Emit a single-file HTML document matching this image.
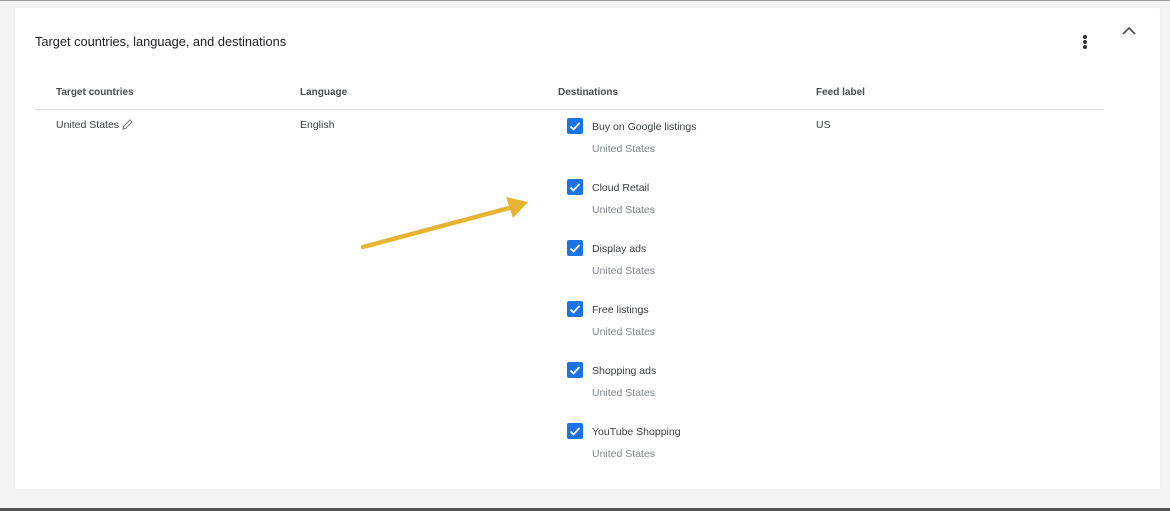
<!DOCTYPE html>
<html><head><style>
body{margin:0;width:1170px;height:511px;background:#f3f3f3;position:relative;overflow:hidden;font-family:"Liberation Sans",Arial,sans-serif;}
.top{position:absolute;left:0;top:0;width:1170px;height:1px;background:#9a9a9a}
.bot{position:absolute;left:0;bottom:0;width:1170px;height:3px;background:#555}
.card{position:absolute;left:15px;top:8px;width:1145px;height:481px;background:#fff;border-radius:2px;box-shadow:0 0 1px #ddd}
.t{position:absolute;font-size:10.5px;color:#3c4043;white-space:nowrap;line-height:13px}
.h{font-weight:bold;color:#4a4d50;font-size:10px}
.sub{color:#80868b}
.cb{position:absolute;left:567px;width:16px;height:16px;background:#1a73e8;border-radius:2px}
.cb svg{position:absolute;left:0;top:0}
</style></head><body>
<div class="top"></div>
<div class="card"></div>
<div class="t" style="left:35px;top:35px;font-size:12.8px;color:#202124">Target countries, language, and destinations</div>
<div style="position:absolute;left:1083px;top:35px;width:4px">
<div style="width:4px;height:4px;border-radius:2px;background:#333;margin-bottom:1px"></div>
<div style="width:4px;height:4px;border-radius:2px;background:#333;margin-bottom:1px"></div>
<div style="width:4px;height:4px;border-radius:2px;background:#333"></div></div>
<svg style="position:absolute;left:1121px;top:26px" width="16" height="10"><path d="M2 8 L8 2 L14 8" stroke="#555" stroke-width="1.8" fill="none"/></svg>
<div class="t h" style="left:56px;top:86px">Target countries</div>
<div class="t h" style="left:300px;top:86px">Language</div>
<div class="t h" style="left:558px;top:86px">Destinations</div>
<div class="t h" style="left:816px;top:86px">Feed label</div>
<div style="position:absolute;left:35px;top:109px;width:1069px;height:1px;background:#e0e0e0"></div>
<div class="t" style="left:56px;top:119px">United States</div>
<svg style="position:absolute;left:121px;top:118px" width="13" height="13"><path d="M2 11 L2.5 8.5 L9 2 L11 4 L4.5 10.5 Z" stroke="#777" stroke-width="1" fill="none"/></svg>
<div class="t" style="left:300px;top:119px">English</div>
<div class="t" style="left:816px;top:119px">US</div>

<div class="cb" style="top:118px"><svg width="16" height="16"><path d="M3.5 8.5 L6.5 11.5 L12.5 5" stroke="#fff" stroke-width="1.8" fill="none"/></svg></div>
<div class="t" style="left:592px;top:121px">Buy on Google listings</div><div class="t sub" style="left:592px;top:143px">United States</div>
<div class="cb" style="top:179px"><svg width="16" height="16"><path d="M3.5 8.5 L6.5 11.5 L12.5 5" stroke="#fff" stroke-width="1.8" fill="none"/></svg></div>
<div class="t" style="left:592px;top:182px">Cloud Retail</div><div class="t sub" style="left:592px;top:204px">United States</div>
<div class="cb" style="top:240px"><svg width="16" height="16"><path d="M3.5 8.5 L6.5 11.5 L12.5 5" stroke="#fff" stroke-width="1.8" fill="none"/></svg></div>
<div class="t" style="left:592px;top:243px">Display ads</div><div class="t sub" style="left:592px;top:265px">United States</div>
<div class="cb" style="top:301px"><svg width="16" height="16"><path d="M3.5 8.5 L6.5 11.5 L12.5 5" stroke="#fff" stroke-width="1.8" fill="none"/></svg></div>
<div class="t" style="left:592px;top:304px">Free listings</div><div class="t sub" style="left:592px;top:326px">United States</div>
<div class="cb" style="top:362px"><svg width="16" height="16"><path d="M3.5 8.5 L6.5 11.5 L12.5 5" stroke="#fff" stroke-width="1.8" fill="none"/></svg></div>
<div class="t" style="left:592px;top:365px">Shopping ads</div><div class="t sub" style="left:592px;top:387px">United States</div>
<div class="cb" style="top:423px"><svg width="16" height="16"><path d="M3.5 8.5 L6.5 11.5 L12.5 5" stroke="#fff" stroke-width="1.8" fill="none"/></svg></div>
<div class="t" style="left:592px;top:426px">YouTube Shopping</div><div class="t sub" style="left:592px;top:448px">United States</div>

<svg style="position:absolute;left:355px;top:190px" width="180" height="70"><path d="M8 57 L158 17" stroke="#e6b432" stroke-width="4.5" stroke-linecap="round"/><path d="M151 7 L173 12 L158 28 Z" fill="#e6b432"/></svg>
<div class="bot"></div>
</body></html>
